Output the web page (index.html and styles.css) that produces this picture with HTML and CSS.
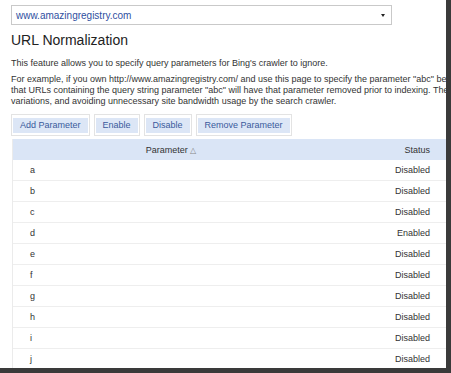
FILE: index.html
```html
<!DOCTYPE html>
<html>
<head>
<meta charset="utf-8">
<link rel="stylesheet" href="styles.css">
</head>
<body>
<div class="frame">
  <div class="page">
    <div class="select">
      <span class="select-text">www.amazingregistry.com</span>
      <span class="arrow"></span>
    </div>
    <h1 class="title">URL Normalization</h1>
    <p class="intro">This feature allows you to specify query parameters for Bing's crawler to ignore.</p>
    <p class="example">For example, if you own http://www.amazingregistry.com/ and use this page to specify the parameter "abc" because it is not relevant,<br>that URLs containing the query string parameter "abc" will have that parameter removed prior to indexing. The result is fewer URL<br>variations, and avoiding unnecessary site bandwidth usage by the search crawler.</p>
    <div class="toolbar">
      <span class="btn"><span class="btn-face">Add Parameter</span></span>
      <span class="btn"><span class="btn-face">Enable</span></span>
      <span class="btn"><span class="btn-face">Disable</span></span>
      <span class="btn"><span class="btn-face">Remove Parameter</span></span>
    </div>
    <div class="table">
      <div class="row head">
        <div class="c-param">Parameter <span class="sort">&#9651;</span></div>
        <div class="c-status">Status</div>
      </div>
      <div class="row"><div class="c-name">a</div><div class="c-status">Disabled</div></div>
      <div class="row"><div class="c-name">b</div><div class="c-status">Disabled</div></div>
      <div class="row"><div class="c-name">c</div><div class="c-status">Disabled</div></div>
      <div class="row"><div class="c-name">d</div><div class="c-status">Enabled</div></div>
      <div class="row"><div class="c-name">e</div><div class="c-status">Disabled</div></div>
      <div class="row"><div class="c-name">f</div><div class="c-status">Disabled</div></div>
      <div class="row"><div class="c-name">g</div><div class="c-status">Disabled</div></div>
      <div class="row"><div class="c-name">h</div><div class="c-status">Disabled</div></div>
      <div class="row"><div class="c-name">i</div><div class="c-status">Disabled</div></div>
      <div class="row"><div class="c-name">j</div><div class="c-status">Disabled</div></div>
    </div>
  </div>
</div>
</body>
</html>
```
FILE: styles.css
```css
html, body {
  margin: 0;
  padding: 0;
  background: #fff;
}
body {
  font-family: "Liberation Sans", Arial, sans-serif;
  color: #333;
  width: 451px;
  height: 373px;
  overflow: hidden;
}
.frame {
  width: 446px;
  height: 368px;
  overflow: hidden;
  border-right: 5px solid #3a3a3a;
  border-bottom: 5px solid #3a3a3a;
}
.page {
  padding: 5px 0 0 11px;
}
.select {
  box-sizing: border-box;
  width: 381px;
  height: 20px;
  border: 1px solid #c9c9c9;
  display: flex;
  align-items: center;
  justify-content: space-between;
  padding: 0 6px 0 4px;
}
.select-text {
  font-size: 10px;
  color: #2f4f9f;
}
.arrow {
  width: 0;
  height: 0;
  border-left: 2px solid transparent;
  border-right: 2px solid transparent;
  border-top: 3px solid #222;
}
.title {
  margin: 7px 0 0;
  font-size: 14px;
  line-height: 17px;
  font-weight: normal;
  color: #222;
}
.intro, .example {
  font-size: 9px;
  line-height: 11px;
  white-space: nowrap;
  color: #333;
}
.intro {
  margin: 9px 0 0;
}
.example {
  margin: 5px 0 0;
}
.toolbar {
  display: flex;
  gap: 4px;
  margin-top: 7px;
}
.btn {
  display: block;
  border: 1px solid #e3e3e3;
  padding: 3px 1px 2px;
  background: #fff;
}
.btn-face {
  display: block;
  background: #dce6f6;
  color: #3a5a9c;
  font-size: 9px;
  line-height: 15px;
  padding: 0 7px;
}
.table {
  margin-top: 3px;
  margin-left: 1px;
  border-left: 1px solid #ebebeb;
  font-size: 9px;
}
.row {
  display: grid;
  grid-template-columns: 316px 1fr;
  height: 21px;
  align-items: center;
  border-bottom: 1px solid #eeeeee;
  box-sizing: border-box;
}
.row.head {
  background: #dae5f6;
  border-bottom: none;
  color: #333;
}
.c-param {
  text-align: center;
}
.sort {
  font-size: 8px;
  color: #888;
}
.c-name {
  padding-left: 17px;
}
.c-status {
  text-align: right;
  padding-right: 16px;
}
```
